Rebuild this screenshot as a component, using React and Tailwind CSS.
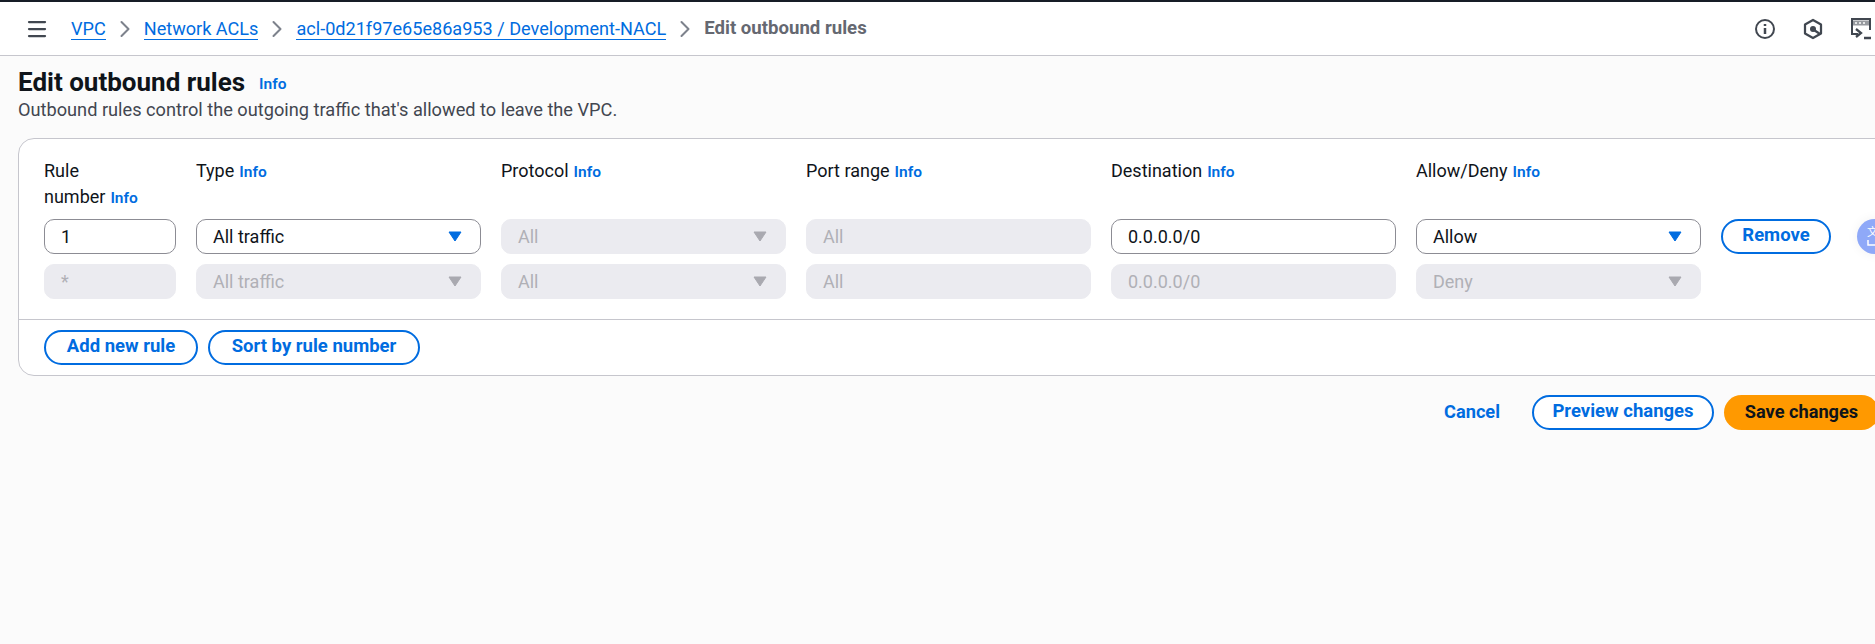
import { Menu, ChevronRight } from 'lucide-react';

const FONT = "font-['Roboto',sans-serif]";

// ── Small bits ─────────────────────────────────────
function Info() {
  return <span className="ml-[5px] text-[15.5px] font-semibold text-[#006ce0]">Info</span>;
}

function Caret({ disabled }) {
  return (
    <svg width="14" height="11" viewBox="0 0 14 11" className="shrink-0">
      <path d="M1 1h12L7 10z" fill={disabled ? '#a9a9b0' : '#006ce0'} stroke={disabled ? '#a9a9b0' : '#006ce0'} strokeLinejoin="round" />
    </svg>
  );
}

function Field({ value, select, disabled }) {
  const look = disabled
    ? 'bg-[#ebebf0] text-[#b0b0b6] border-[#ebebf0]'
    : 'bg-white text-[#0f141a] border-[#8c8c94]';
  return (
    <div className={`flex h-[35px] items-center justify-between rounded-[10px] border pb-[1px] pl-[16px] pr-[18px] text-[18px] ${look}`}>
      <span>{value}</span>
      {select && <Caret disabled={disabled} />}
    </div>
  );
}

function OutlineButton({ children, className = '' }) {
  return (
    <button className={`flex h-[35px] items-center justify-center rounded-full border-2 border-[#006ce0] bg-white pb-[2px] text-[18.5px] font-bold text-[#006ce0] ${className}`}>
      {children}
    </button>
  );
}

function Crumb({ children }) {
  return <span className="border-b border-[#006ce0] text-[#006ce0] leading-[21px]">{children}</span>;
}

const Sep = () => <ChevronRight size={28} strokeWidth={1.75} className="mx-[5px] text-[#7d828c]" />;

const HEADERS = ['Type', 'Protocol', 'Port range', 'Destination', 'Allow/Deny'];

const ROWS = [
  [
    { value: '1' },
    { value: 'All traffic', select: true },
    { value: 'All', select: true, disabled: true },
    { value: 'All', disabled: true },
    { value: '0.0.0.0/0' },
    { value: 'Allow', select: true },
  ],
  [
    { value: '*', disabled: true },
    { value: 'All traffic', select: true, disabled: true },
    { value: 'All', select: true, disabled: true },
    { value: 'All', disabled: true },
    { value: '0.0.0.0/0', disabled: true },
    { value: 'Deny', select: true, disabled: true },
  ],
];

const GRID = 'grid grid-cols-[132px_285px_285px_285px_285px_285px_110px] gap-x-[20px]';

// ─────────────────────────────────────────────────────
export default function App() {
  return (
    <div className={`relative h-[644px] w-[1875px] overflow-hidden bg-[#fbfbfb] ${FONT}`}>
      <header className="flex h-[56px] items-center border-t-[2px] border-b border-t-[#161d26] border-b-[#c6c6cd] bg-white pl-[25px] pr-[3px] text-[18.1px]">
        <Menu size={24} strokeWidth={2.25} className="mr-[22px] text-[#414750]" />
        <Crumb>VPC</Crumb>
        <Sep />
        <Crumb>Network ACLs</Crumb>
        <Sep />
        <Crumb>acl-0d21f97e65e86a953 / Development-NACL</Crumb>
        <Sep />
        <span className="text-[18.6px] font-bold text-[#656871]">Edit outbound rules</span>
        <div className="ml-auto flex items-center gap-[27px] text-[#414750]">
          <svg width="22" height="22" viewBox="0 0 22 22" fill="none" stroke="currentColor" strokeWidth="2">
            <circle cx="11" cy="11" r="9" />
            <path d="M11 10v6" strokeWidth="2.5" />
            <path d="M11 6v2" strokeWidth="2.5" />
          </svg>
          <svg width="20" height="22" viewBox="0 0 20 22" fill="none" stroke="currentColor" strokeWidth="2.25">
            <path d="M10 2l8 4.5v9L10 20l-8-4.5v-9z" strokeLinejoin="round" />
            <circle cx="10" cy="11" r="3" fill="currentColor" stroke="none" />
            <path d="M11 12l6 4" />
          </svg>
          <svg width="22" height="24" viewBox="0 0 22 24" fill="none" stroke="currentColor" strokeWidth="2">
            <path d="M8 17H2V2h18v11" />
            <path d="M3 6h16" strokeWidth="5" strokeOpacity="0.55" />
            <path d="M5 6h2M9 6h2M13 6h2" stroke="#fff" strokeWidth="1.5" />
            <path d="M6 12l5 4-5 4" strokeWidth="2.25" />
            <path d="M14 21h7" strokeWidth="2.5" />
          </svg>
        </div>
      </header>

      <main className="pl-[18px] pt-[12px]">
        <div className="flex items-center">
          <h1 className="text-[26px] font-bold leading-[29px] text-[#0f141a]">Edit outbound rules</h1>
          <span className="ml-[14px] mt-[4px] text-[15.5px] font-semibold text-[#006ce0]">Info</span>
        </div>
        <p className="mt-[1px] text-[18.2px] leading-[24px] text-[#424650]">
          Outbound rules control the outgoing traffic that's allowed to leave the VPC.
        </p>

        <section className="mt-[16px] mr-[-24px] rounded-[16px] border border-[#c6c6cd] bg-white">
          <div className="px-[25px] pt-[19px] pb-[20px]">
            <div className={`${GRID} text-[18px] leading-[26px] text-[#0f141a]`}>
              <div>Rule<br />number<Info /></div>
              {HEADERS.map((h) => (
                <div key={h}>{h}<Info /></div>
              ))}
            </div>
            <div className={`${GRID} mt-[8px]`}>
              {ROWS[0].map((f, i) => <Field key={i} {...f} />)}
              <OutlineButton>Remove</OutlineButton>
            </div>
            <div className={`${GRID} mt-[10px]`}>
              {ROWS[1].map((f, i) => <Field key={i} {...f} />)}
            </div>
          </div>
          <div className="flex gap-[10px] border-t border-[#c6c6cd] px-[25px] pt-[10px] pb-[10px]">
            <OutlineButton className="w-[154px]">Add new rule</OutlineButton>
            <OutlineButton className="w-[212px]">Sort by rule number</OutlineButton>
          </div>
        </section>

        <div className="mt-[19px] mr-[-4px] flex items-center justify-end gap-[10px]">
          <button className="mr-[22px] pb-[2px] text-[18.2px] font-bold text-[#006ce0]">Cancel</button>
          <OutlineButton className="w-[182px]">Preview changes</OutlineButton>
          <button className="flex h-[35px] w-[155px] items-center justify-center rounded-full bg-[#ff9900] pb-[2px] text-[18.2px] font-bold text-[#0f141a]">
            Save changes
          </button>
        </div>
      </main>

      {/* translate extension bubble floats over the page */}
      <div className="absolute left-[1857px] top-[219px] flex h-[35px] w-[35px] flex-col rounded-full bg-[#8fa9f8] pl-[10px] pt-[7px] shadow-[0_0_12px_rgba(0,0,0,0.06)]">
        <span className="text-[11px] leading-none text-white font-['Noto_Sans_CJK_SC',sans-serif]">文</span>
        <svg width="8" height="6" viewBox="0 0 8 6" className="mt-[3px]" fill="none" stroke="#fff" strokeWidth="1.5">
          <path d="M1 0v5h7" />
        </svg>
      </div>
    </div>
  );
}
